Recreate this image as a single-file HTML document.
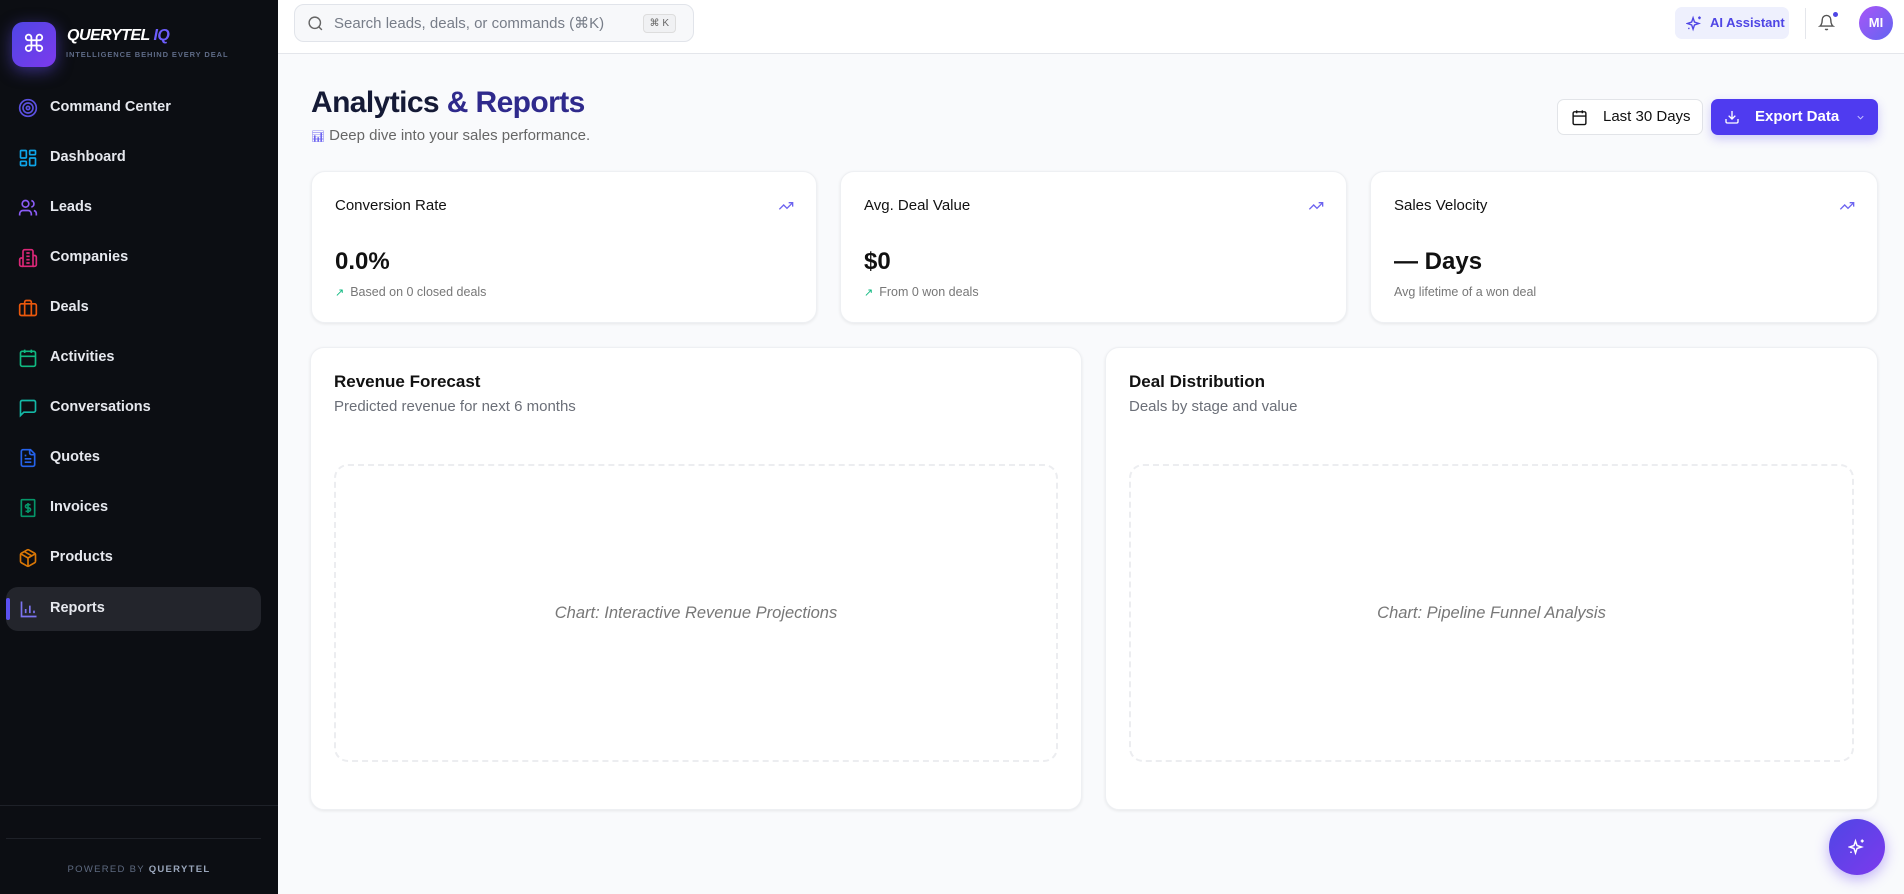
<!DOCTYPE html>
<html><head><meta charset="utf-8"><style>
*{box-sizing:border-box;margin:0;padding:0}
body{width:1904px;height:894px;overflow:hidden;font-family:"Liberation Sans",sans-serif;background:#f9fafc;position:relative}
.sb{position:absolute;left:0;top:0;width:278px;height:894px;background:#0c0e13}
.logo{position:absolute;left:12px;top:22px;width:44px;height:45px;border-radius:11px;background:linear-gradient(135deg,#4f46e5,#7c3aed);box-shadow:0 4px 16px rgba(99,80,240,.5);color:#fff;font-size:24px;text-align:center;line-height:45px}
.brand{position:absolute;left:67px;top:27px;color:#fff;font-weight:bold;font-style:italic;font-size:16px;letter-spacing:-.5px}
.brand span{color:#6d5dfc}
.tag{position:absolute;left:66px;top:50px;color:#5e6a86;font-size:7.5px;font-weight:bold;letter-spacing:.9px}
.nav{position:absolute;left:0;width:278px;height:44px;color:#e6e8ee;font-size:14.5px;font-weight:bold}
.nav svg{position:absolute;left:18px;top:12px}
.nav span{position:absolute;left:50px;top:13px}
.act{left:6px;width:255px;background:#23252c;border-radius:12px}
.act svg{left:13px}.act span{left:44px}
.act:before{content:"";position:absolute;left:0;top:11px;width:4px;height:22px;border-radius:2px;background:#5b50f0}
.top{position:absolute;left:278px;top:0;right:0;height:54px;background:#fff;border-bottom:1px solid #e4e6eb}
.search{position:absolute;left:16px;top:4px;width:400px;height:38px;border:1px solid #e1e4ea;border-radius:10px;background:#f7f8fa;color:#777d88;font-size:15px}
.card{position:absolute;background:#fff;border-radius:14px;box-shadow:0 1px 3px rgba(0,0,0,.08);border:1px solid #eef0f3}
.lbl{position:absolute;left:23px;top:25px;font-size:15px;color:#111}
.val{position:absolute;left:23px;top:76px;font-size:24px;font-weight:bold;color:#111}
.sub{position:absolute;left:23px;top:113px;font-size:12.5px;color:#777}
.sub b{color:#10b981;font-weight:normal;margin-right:6px;font-size:11px}
.trend{position:absolute;right:22px;top:26px}
.bt{position:absolute;left:23px;top:24px;font-size:17px;font-weight:bold;color:#111}
.bs{position:absolute;left:23px;top:50px;font-size:15px;color:#6b6f78}
.dash{position:absolute;left:23px;top:116px;right:23px;height:298px;border:2px dashed #ecedf0;border-radius:14px;display:flex;align-items:center;justify-content:center;font-style:italic;font-size:16.5px;color:#777}
</style></head><body>
<div class="sb">
<div class="logo">⌘</div>
<div class="brand">QUERYTEL <span>IQ</span></div>
<div class="tag">INTELLIGENCE BEHIND EVERY DEAL</div>
<div class="nav" style="top:86px"><svg width="20" height="20" viewBox="0 0 24 24" fill="none" stroke="#5b50e0" stroke-width="2"><circle cx="12" cy="12" r="10"/><circle cx="12" cy="12" r="6"/><circle cx="12" cy="12" r="2"/></svg><span>Command Center</span></div>
<div class="nav" style="top:136px"><svg width="20" height="20" viewBox="0 0 24 24" fill="none" stroke="#0ea5e9" stroke-width="2"><rect x="3" y="3" width="7" height="9" rx="1"/><rect x="14" y="3" width="7" height="5" rx="1"/><rect x="14" y="12" width="7" height="9" rx="1"/><rect x="3" y="16" width="7" height="5" rx="1"/></svg><span>Dashboard</span></div>
<div class="nav" style="top:186px"><svg width="20" height="20" viewBox="0 0 24 24" fill="none" stroke="#8b5cf6" stroke-width="2"><path d="M16 21v-2a4 4 0 0 0-4-4H6a4 4 0 0 0-4 4v2"/><circle cx="9" cy="7" r="4"/><path d="M22 21v-2a4 4 0 0 0-3-3.9M16 3.1a4 4 0 0 1 0 7.8"/></svg><span>Leads</span></div>
<div class="nav" style="top:236px"><svg width="20" height="20" viewBox="0 0 24 24" fill="none" stroke="#db2777" stroke-width="2"><path d="M6 22V4a2 2 0 0 1 2-2h8a2 2 0 0 1 2 2v18Z"/><path d="M6 12H4a2 2 0 0 0-2 2v6a2 2 0 0 0 2 2h2M18 9h2a2 2 0 0 1 2 2v9a2 2 0 0 1-2 2h-2M10 6h4M10 10h4M10 14h4M10 18h4"/></svg><span>Companies</span></div>
<div class="nav" style="top:286px"><svg width="20" height="20" viewBox="0 0 24 24" fill="none" stroke="#ea580c" stroke-width="2"><rect x="2" y="7" width="20" height="14" rx="2"/><path d="M16 21V5a2 2 0 0 0-2-2h-4a2 2 0 0 0-2 2v16"/></svg><span>Deals</span></div>
<div class="nav" style="top:336px"><svg width="20" height="20" viewBox="0 0 24 24" fill="none" stroke="#10b981" stroke-width="2"><rect x="3" y="4" width="18" height="18" rx="2"/><path d="M16 2v4M8 2v4M3 10h18M8 14h.01M12 14h.01M16 14h.01M8 18h.01M12 18h.01M16 18h.01"/></svg><span>Activities</span></div>
<div class="nav" style="top:386px"><svg width="20" height="20" viewBox="0 0 24 24" fill="none" stroke="#14b8a6" stroke-width="2"><path d="M21 15a2 2 0 0 1-2 2H7l-4 4V5a2 2 0 0 1 2-2h14a2 2 0 0 1 2 2z"/></svg><span>Conversations</span></div>
<div class="nav" style="top:436px"><svg width="20" height="20" viewBox="0 0 24 24" fill="none" stroke="#2563eb" stroke-width="2"><path d="M15 2H6a2 2 0 0 0-2 2v16a2 2 0 0 0 2 2h12a2 2 0 0 0 2-2V7Z"/><path d="M14 2v4a2 2 0 0 0 2 2h4M16 13H8M16 17H8M10 9H8"/></svg><span>Quotes</span></div>
<div class="nav" style="top:486px"><svg width="20" height="20" viewBox="0 0 24 24" fill="none" stroke="#059669" stroke-width="2"><rect x="4" y="2" width="16" height="20" rx="1"/><path d="M15 8h-4a2 2 0 0 0 0 4h2a2 2 0 0 1 0 4H9M12 6v12"/></svg><span>Invoices</span></div>
<div class="nav" style="top:536px"><svg width="20" height="20" viewBox="0 0 24 24" fill="none" stroke="#d97706" stroke-width="2"><path d="M21 8a2 2 0 0 0-1-1.7l-7-4a2 2 0 0 0-2 0l-7 4A2 2 0 0 0 3 8v8a2 2 0 0 0 1 1.7l7 4a2 2 0 0 0 2 0l7-4a2 2 0 0 0 1-1.7Z"/><path d="M3.3 7 12 12l8.7-5M12 22V12M7.5 4.3l9 5.1"/></svg><span>Products</span></div>
<div class="nav act" style="top:587px"><svg width="20" height="20" viewBox="0 0 24 24" fill="none" stroke="#7c74f0" stroke-width="2"><path d="M3 3v18h18M8 17v-5M13 17V8M18 17v-3"/></svg><span>Reports</span></div>
<div style="position:absolute;left:0;top:805px;width:278px;border-top:1px solid #1e2128"></div>
<div style="position:absolute;left:6px;top:838px;width:255px;border-top:1px solid #1e2128"></div>
<div style="position:absolute;left:0;top:864px;width:278px;text-align:center;font-size:9.5px;letter-spacing:1.3px;color:#5e6a80">POWERED BY <b style="color:#9aa6bb">QUERYTEL</b></div>
</div>
<div class="top">
<div class="search"><svg style="position:absolute;left:12px;top:10px" width="17" height="17" viewBox="0 0 24 24" fill="none" stroke="#666" stroke-width="2"><circle cx="11" cy="11" r="8"/><path d="m21 21-4.3-4.3"/></svg><span style="position:absolute;left:39px;top:9px">Search leads, deals, or commands (⌘K)</span><span style="position:absolute;right:17px;top:9px;font-size:10px;border:1px solid #ddd;border-radius:4px;padding:3px 6px;background:#f0f1f3;color:#666">⌘ K</span></div>
<div style="position:absolute;left:1397px;top:7px;width:114px;height:32px;border-radius:7px;background:#eef0fd;color:#4f46e5;font-size:13px;font-weight:bold;line-height:32px;padding-left:35px"><svg style="position:absolute;left:11px;top:8px" width="17" height="17" viewBox="0 0 24 24" fill="none" stroke="#4f46e5" stroke-width="2"><path d="M10 4l2 6 6 2-6 2-2 6-2-6-6-2 6-2zM19 2v4M17 4h4M4 18v2"/></svg>AI Assistant</div>
<div style="position:absolute;left:1527px;top:8px;height:31px;border-left:1px solid #e4e6eb"></div>
<svg style="position:absolute;left:1540px;top:14px" width="17" height="17" viewBox="0 0 24 24" fill="none" stroke="#555" stroke-width="2"><path d="M6 8a6 6 0 0 1 12 0c0 7 3 9 3 9H3s3-2 3-9M10.3 21a1.9 1.9 0 0 0 3.4 0"/></svg>
<div style="position:absolute;left:1555px;top:12px;width:5px;height:5px;border-radius:50%;background:#4f46e5"></div>
<div style="position:absolute;left:1581px;top:6px;width:34px;height:34px;border-radius:50%;background:linear-gradient(135deg,#a855f7,#6366f1);color:#fff;font-weight:bold;font-size:13px;text-align:center;line-height:34px">MI</div>
</div>
<div style="position:absolute;left:311px;top:86px;font-size:30px;font-weight:bold;color:#151a36;letter-spacing:-.6px">Analytics <span style="color:#2f2a8c">&amp; Reports</span></div>
<div style="position:absolute;left:311px;top:127px;font-size:15px;color:#666"><span style="color:#6d64f0;font-size:11px">📊︎</span> Deep dive into your sales performance.</div>
<div style="position:absolute;left:1557px;top:99px;width:146px;height:36px;background:#fff;border:1px solid #e2e4e8;border-radius:7px;font-size:15px;color:#111;line-height:34px;padding-left:45px"><svg style="position:absolute;left:13px;top:9px" width="17" height="17" viewBox="0 0 24 24" fill="none" stroke="#111" stroke-width="2"><rect x="3" y="4" width="18" height="18" rx="2"/><path d="M16 2v4M8 2v4M3 10h18"/></svg>Last 30 Days</div>
<div style="position:absolute;left:1711px;top:99px;width:167px;height:36px;background:#4f3bf0;border-radius:7px;font-size:15px;color:#fff;font-weight:bold;line-height:36px;padding-left:44px;box-shadow:0 4px 10px rgba(79,59,240,.25)"><svg style="position:absolute;left:13px;top:10px" width="16" height="16" viewBox="0 0 24 24" fill="none" stroke="#fff" stroke-width="2"><path d="M21 15v4a2 2 0 0 1-2 2H5a2 2 0 0 1-2-2v-4M7 10l5 5 5-5M12 15V3"/></svg>Export Data<svg style="position:absolute;right:12px;top:13px" width="11" height="11" viewBox="0 0 24 24" fill="none" stroke="#c8c2ff" stroke-width="2"><path d="m6 9 6 6 6-6"/></svg></div>

<div class="card" style="left:311px;top:171px;width:506px;height:152px"><div class="lbl">Conversion Rate</div><svg class="trend" width="16" height="16" viewBox="0 0 24 24" fill="none" stroke="#6d64f0" stroke-width="2"><path d="M22 7l-8.5 8.5-5-5L2 17M16 7h6v6"/></svg><div class="val">0.0%</div><div class="sub"><b>↗</b>Based on 0 closed deals</div></div>
<div class="card" style="left:840px;top:171px;width:507px;height:152px"><div class="lbl">Avg. Deal Value</div><svg class="trend" width="16" height="16" viewBox="0 0 24 24" fill="none" stroke="#6d64f0" stroke-width="2"><path d="M22 7l-8.5 8.5-5-5L2 17M16 7h6v6"/></svg><div class="val">$0</div><div class="sub"><b>↗</b>From 0 won deals</div></div>
<div class="card" style="left:1370px;top:171px;width:508px;height:152px"><div class="lbl">Sales Velocity</div><svg class="trend" width="16" height="16" viewBox="0 0 24 24" fill="none" stroke="#6d64f0" stroke-width="2"><path d="M22 7l-8.5 8.5-5-5L2 17M16 7h6v6"/></svg><div class="val">— Days</div><div class="sub">Avg lifetime of a won deal</div></div>

<div class="card" style="left:310px;top:347px;width:772px;height:463px"><div class="bt">Revenue Forecast</div><div class="bs">Predicted revenue for next 6 months</div><div class="dash">Chart: Interactive Revenue Projections</div></div>
<div class="card" style="left:1105px;top:347px;width:773px;height:463px"><div class="bt">Deal Distribution</div><div class="bs">Deals by stage and value</div><div class="dash">Chart: Pipeline Funnel Analysis</div></div>

<div style="position:absolute;left:1829px;top:819px;width:56px;height:56px;border-radius:50%;background:linear-gradient(135deg,#4f46e5,#7c3aed);box-shadow:0 4px 14px rgba(100,60,240,.4)"><svg style="position:absolute;left:19px;top:19px" width="18" height="18" viewBox="0 0 24 24" fill="none" stroke="#fff" stroke-width="2"><path d="M10 4l2 6 6 2-6 2-2 6-2-6-6-2 6-2zM19 2v4M17 4h4M4 18v2"/></svg></div>
</body></html>
